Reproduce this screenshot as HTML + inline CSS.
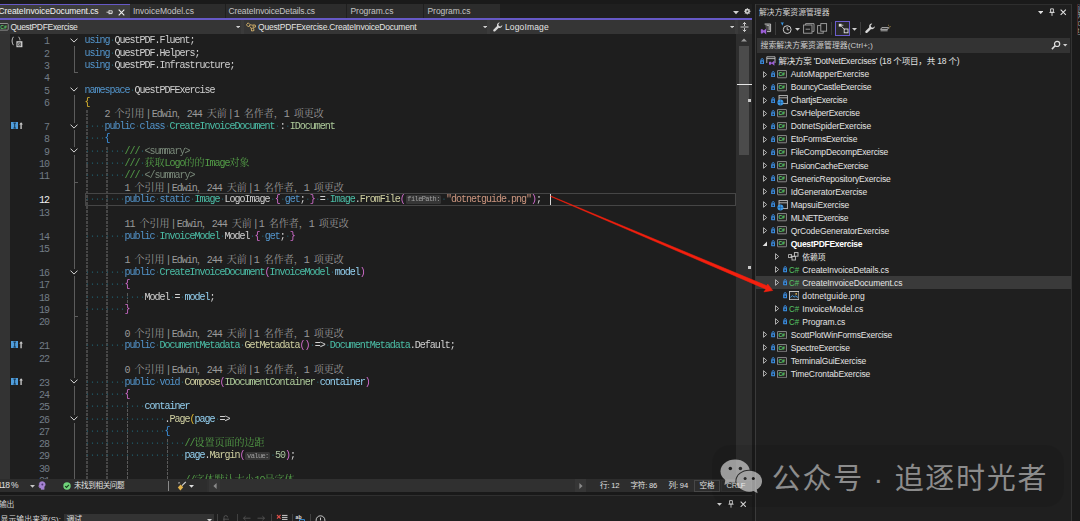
<!DOCTYPE html>
<html lang="zh-CN"><head><meta charset="utf-8"><title>CreateInvoiceDocument.cs</title>
<style>
html,body{margin:0;padding:0;background:#1a1a1a;}
body{width:1080px;height:521px;position:relative;overflow:hidden;font-family:'Liberation Sans','Noto Sans CJK SC',sans-serif;}
.r{position:absolute;display:block}
.t{position:absolute;white-space:pre;font-family:'Liberation Sans','Noto Sans CJK SC',sans-serif;}
.ln,.cl,.num{position:absolute;white-space:pre;font-family:'Liberation Mono','Noto Serif CJK SC',monospace;font-size:10px;letter-spacing:-1px;line-height:12.29px;height:12.29px;color:#dcdcdc}
.ln{left:84.5px;opacity:.94}
.cl{color:#9a9a9a;line-height:11.8px;height:11.8px}
.num{left:18px;width:31px;text-align:right;color:#727c86}
.num.cur{color:#f0f0f0}
.cj{letter-spacing:0;font-size:10px}
.bar{margin:0 1.05px}
.g{position:absolute;width:1.7px;background:repeating-linear-gradient(to bottom,#474747 0,#474747 2.7px,transparent 2.7px,transparent 3.7px)}
.g.thin{width:1px;background:repeating-linear-gradient(to bottom,#5a5a5a 0,#5a5a5a 2.7px,transparent 2.7px,transparent 3.7px)}
.w{color:#21505c}
.k{color:#569cd6}.t_{}
.ln .t{position:static;color:#4ec9b0;font-family:inherit}
.i{color:#b8d7a3}.p{color:#dcdcdc}.v{color:#9cdcfe}.m{color:#dcdcaa}
.c{color:#57a64a}.x{color:#7f8f7f}.s{color:#d69d85}.n{color:#b5cea8}
.b1{color:#e8c030}.b2{color:#3f9cf0}.b3{color:#da70d6}
.hint{display:inline-block;font-size:7px;letter-spacing:-0.6px;line-height:8.6px;height:8.6px;vertical-align:0.8px;background:#383838;color:#a8a8a8;border-radius:1.5px;padding:0 1.2px 0 1.8px;margin:0 0 0 0.7px}
</style></head>
<body>
<div class="r" style="left:0px;top:0px;width:1080px;height:4px;background:#1a1a1a;"></div>
<div class="r" style="left:0px;top:4px;width:752px;height:14px;background:#1f1f1f;"></div>
<div class="r" style="left:0px;top:4px;width:130px;height:14px;background:#3d3d3d;"></div>
<div class="r" style="left:0px;top:3.6px;width:130px;height:1.5px;background:#6659c6;"></div>
<div class="r" style="left:130.3px;top:4.1px;width:94.89999999999998px;height:14px;background:#2c2c2c;"></div>
<div class="r" style="left:226.2px;top:4.1px;width:119.5px;height:14px;background:#2c2c2c;"></div>
<div class="r" style="left:346.7px;top:4.1px;width:76.69999999999999px;height:14px;background:#2c2c2c;"></div>
<div class="r" style="left:424.4px;top:4.1px;width:76.10000000000002px;height:14px;background:#2c2c2c;"></div>
<div class="r" style="left:0px;top:17.8px;width:752px;height:2.2px;background:#6659c6;"></div>
<div class="t" style="left:-1.5px;top:4.05px;height:14px;line-height:14px;font-size:8.5px;color:#f2f2f2;font-weight:normal;letter-spacing:-0.085px;">CreateInvoiceDocument.cs</div>
<div class="t" style="left:133px;top:4.05px;height:14px;line-height:14px;font-size:8.5px;color:#c4c4c4;font-weight:normal;letter-spacing:0.003px;">InvoiceModel.cs</div>
<div class="t" style="left:228.5px;top:4.05px;height:14px;line-height:14px;font-size:8.5px;color:#c4c4c4;font-weight:normal;letter-spacing:-0.122px;">CreateInvoiceDetails.cs</div>
<div class="t" style="left:350.5px;top:4.05px;height:14px;line-height:14px;font-size:8.5px;color:#c4c4c4;font-weight:normal;letter-spacing:-0.047px;">Program.cs</div>
<div class="t" style="left:427.5px;top:4.05px;height:14px;line-height:14px;font-size:8.5px;color:#c4c4c4;font-weight:normal;letter-spacing:-0.047px;">Program.cs</div>
<svg class="r" style="left:106px;top:8px" width="8" height="8" viewBox="0 0 8 8"><path d="M0.5 4.2H3M3 2.2V6.2M3 2.8H6.2V5.2H3M3 5.6H6.2" stroke="#e0e0e0" stroke-width="0.9" fill="none"/></svg>
<svg class="r" style="left:118px;top:9px" width="7" height="7" viewBox="0 0 7 7"><path d="M0.7 0.7L6.3 6.3M6.3 0.7L0.7 6.3" stroke="#f0f0f0" stroke-width="1.1" fill="none"/></svg>
<svg class="r" style="left:732.5px;top:10.5px" width="6" height="4" viewBox="0 0 6 4"><path d="M0 0H6L3 3.2Z" fill="#d0d0d0"/></svg>
<svg class="r" style="left:744px;top:8.4px" width="6.6" height="6.6" viewBox="0 0 8 8"><circle cx="4" cy="4" r="2.3" fill="none" stroke="#d0d0d0" stroke-width="1.6"/><path d="M4 0V8M0 4H8M1.2 1.2L6.8 6.8M6.8 1.2L1.2 6.8" stroke="#d0d0d0" stroke-width="1"/><circle cx="4" cy="4" r="1" fill="#1f1f1f"/></svg>
<div class="r" style="left:0px;top:20px;width:752px;height:13.8px;background:#353535;"></div>
<div class="r" style="left:241px;top:20px;width:3px;height:13.8px;background:#3b3b3b;"></div>
<div class="r" style="left:486.5px;top:20px;width:3px;height:13.8px;background:#3b3b3b;"></div>
<div class="r" style="left:735px;top:20px;width:3px;height:13.8px;background:#3b3b3b;"></div>
<svg class="r" style="left:0px;top:22.5px" width="9" height="8" viewBox="0 0 9 8"><rect x="-1" y="0.5" width="9.2" height="6.6" rx="0.8" fill="#2a2a2a" stroke="#9a9a9a" stroke-width="0.9"/><text x="0.3" y="5.6" font-family="Liberation Sans,sans-serif" font-size="5" font-weight="bold" fill="#5fc46a">C#</text></svg>
<div class="t" style="left:10.5px;top:20.05px;height:14px;line-height:14px;font-size:8.5px;color:#e4e4e4;font-weight:normal;letter-spacing:-0.330px;">QuestPDFExercise</div>
<svg class="r" style="left:235.7px;top:25.7px" width="4.2" height="2.5" viewBox="0 0 5 3"><path d="M0 0H5L2.5 2.8Z" fill="#d0d0d0"/></svg>
<svg class="r" style="left:246px;top:21.5px" width="10" height="10" viewBox="0 0 10 10"><path d="M2.2 0.8L4.2 2.8L2.2 4.8L0.4 2.8Z M6.8 3L9.2 3L9.6 5L7.4 5.4Z M5.2 6.2L7.6 6.2L8 8.6L5.6 9Z" fill="none" stroke="#d6b36c" stroke-width="0.9"/><path d="M4 3H6.6M3.4 4.2L5.4 6.6" stroke="#d6b36c" stroke-width="0.8"/></svg>
<div class="t" style="left:258px;top:20.05px;height:14px;line-height:14px;font-size:8.5px;color:#e4e4e4;font-weight:normal;letter-spacing:-0.193px;">QuestPDFExercise.CreateInvoiceDocument</div>
<svg class="r" style="left:482.9px;top:25.7px" width="4.2" height="2.5" viewBox="0 0 5 3"><path d="M0 0H5L2.5 2.8Z" fill="#d0d0d0"/></svg>
<svg class="r" style="left:493px;top:21.5px" width="10" height="10" viewBox="0 0 10 10"><path d="M6.9 0.6A2.6 2.6 0 0 0 4.1 4.0L0.6 7.6A1 1 0 0 0 2.2 9.2L5.8 5.7A2.6 2.6 0 0 0 9.3 3.0L7.6 4.6L5.9 4.0L5.3 2.3Z" fill="#d8d8d8"/></svg>
<div class="t" style="left:505px;top:20.05px;height:14px;line-height:14px;font-size:8.5px;color:#e4e4e4;font-weight:normal;letter-spacing:0.139px;">LogoImage</div>
<svg class="r" style="left:729.8px;top:25.7px" width="4.2" height="2.5" viewBox="0 0 5 3"><path d="M0 0H5L2.5 2.8Z" fill="#d0d0d0"/></svg>
<svg class="r" style="left:740px;top:21.5px" width="9" height="10" viewBox="0 0 9 10"><path d="M0.5 5H8.5M4.5 0.5V4M4.5 6V9.5M2.8 2.2L4.5 0.5L6.2 2.2M2.8 7.8L4.5 9.5L6.2 7.8" stroke="#d8d8d8" stroke-width="0.9" fill="none"/></svg>
<div class="r" style="left:0px;top:33.8px;width:752px;height:445.5px;background:#1e1e1e;"></div>
<div class="r" style="left:0px;top:33.8px;width:10px;height:445.5px;background:#333333;"></div>
<div class="r" style="left:736px;top:33.8px;width:16px;height:445.5px;background:#2e2e2e;"></div>
<div class="r" style="left:738.5px;top:45.5px;width:10px;height:109px;background:#4b4b4b;"></div>
<svg class="r" style="left:740.5px;top:37.5px" width="6" height="4" viewBox="0 0 6 4"><path d="M0 3.6H6L3 0.4Z" fill="#9a9a9a"/></svg>
<div class="r" style="left:736.5px;top:84.2px;width:15.5px;height:1.1px;background:#e6e6e6;"></div>
<div class="r" style="left:747.6px;top:98.5px;width:3.4px;height:3.4px;background:#c8c8c8;"></div>
<div class="r" style="left:747.6px;top:265.6px;width:3.4px;height:3.4px;background:#c8c8c8;"></div>
<div class="r" style="left:85px;top:193.34px;width:650.5px;height:12.3px;border:1px solid #464646;box-sizing:border-box"></div>
<div class="r" style="left:550.3px;top:193.83999999999995px;width:1.1px;height:11.3px;background:#dcdcdc;"></div>
<div class="g" style="left:86.2px;top:110.19px;height:378.05px"></div>
<div class="g" style="left:106.2px;top:146.57px;height:341.67px"></div>
<div class="g thin" style="left:126.9px;top:292.58px;height:12.29px"></div>
<div class="g thin" style="left:126.9px;top:402.21px;height:86.03px"></div>
<div class="g thin" style="left:166.9px;top:439.08px;height:49.16px"></div>
<div class="r" style="left:73.6px;top:71.72px;width:4.2px;height:1px;background:#5c5c5c"></div>
<div class="r" style="left:73.6px;top:45.74px;width:1px;height:26.98px;background:#5c5c5c"></div>
<div class="r" style="left:73.6px;top:94.90px;width:1px;height:384.40px;background:#5c5c5c"></div>
<div class="r" style="left:73.6px;top:181.84px;width:4.2px;height:1px;background:#5c5c5c"></div>
<div class="r" style="left:73.6px;top:315.56px;width:4.2px;height:1px;background:#5c5c5c"></div>
<div class="r" style="left:70px;top:36.99px;width:8.4px;height:7.6px;background:#1e1e1e"></div>
<svg class="r" style="left:70.2px;top:38.20px" width="8" height="5" viewBox="0 0 8 5"><path d="M0.5 0.6L4 4.1L7.5 0.6" stroke="#d8d8d8" stroke-width="1" fill="none"/></svg>
<div class="r" style="left:70px;top:86.15px;width:8.4px;height:7.6px;background:#1e1e1e"></div>
<svg class="r" style="left:70.2px;top:87.35px" width="8" height="5" viewBox="0 0 8 5"><path d="M0.5 0.6L4 4.1L7.5 0.6" stroke="#d8d8d8" stroke-width="1" fill="none"/></svg>
<div class="r" style="left:70px;top:122.53px;width:8.4px;height:7.6px;background:#1e1e1e"></div>
<svg class="r" style="left:70.2px;top:123.73px" width="8" height="5" viewBox="0 0 8 5"><path d="M0.5 0.6L4 4.1L7.5 0.6" stroke="#d8d8d8" stroke-width="1" fill="none"/></svg>
<div class="r" style="left:70px;top:147.11px;width:8.4px;height:7.6px;background:#1e1e1e"></div>
<svg class="r" style="left:70.2px;top:148.31px" width="8" height="5" viewBox="0 0 8 5"><path d="M0.5 0.6L4 4.1L7.5 0.6" stroke="#d8d8d8" stroke-width="1" fill="none"/></svg>
<div class="r" style="left:70px;top:268.54px;width:8.4px;height:7.6px;background:#1e1e1e"></div>
<svg class="r" style="left:70.2px;top:269.74px" width="8" height="5" viewBox="0 0 8 5"><path d="M0.5 0.6L4 4.1L7.5 0.6" stroke="#d8d8d8" stroke-width="1" fill="none"/></svg>
<div class="r" style="left:70px;top:378.18px;width:8.4px;height:7.6px;background:#1e1e1e"></div>
<svg class="r" style="left:70.2px;top:379.38px" width="8" height="5" viewBox="0 0 8 5"><path d="M0.5 0.6L4 4.1L7.5 0.6" stroke="#d8d8d8" stroke-width="1" fill="none"/></svg>
<div class="r" style="left:70px;top:415.05px;width:8.4px;height:7.6px;background:#1e1e1e"></div>
<svg class="r" style="left:70.2px;top:416.25px" width="8" height="5" viewBox="0 0 8 5"><path d="M0.5 0.6L4 4.1L7.5 0.6" stroke="#d8d8d8" stroke-width="1" fill="none"/></svg>
<div class="r" style="left:11px;top:122.04px;width:7.3px;height:7.1px;background:#4f9ddb"></div>
<svg class="r" style="left:11px;top:122.04px" width="13" height="7.4" viewBox="0 0 13 7.4"><path d="M2.4 1.1H5M2.4 6.1H5M3.7 1.1V6.1" stroke="#10283d" stroke-width="0.9" fill="none"/><path d="M10.1 7.2V2" stroke="#a8a8a8" stroke-width="1.7" fill="none"/><path d="M8.3 2.6L10.1 0.3L11.9 2.6Z" fill="#d0d0d0"/></svg>
<div class="r" style="left:11px;top:341.30px;width:7.3px;height:7.1px;background:#4f9ddb"></div>
<svg class="r" style="left:11px;top:341.30px" width="13" height="7.4" viewBox="0 0 13 7.4"><path d="M2.4 1.1H5M2.4 6.1H5M3.7 1.1V6.1" stroke="#10283d" stroke-width="0.9" fill="none"/><path d="M10.1 7.2V2" stroke="#a8a8a8" stroke-width="1.7" fill="none"/><path d="M8.3 2.6L10.1 0.3L11.9 2.6Z" fill="#d0d0d0"/></svg>
<div class="r" style="left:11px;top:377.68px;width:7.3px;height:7.1px;background:#4f9ddb"></div>
<svg class="r" style="left:11px;top:377.68px" width="13" height="7.4" viewBox="0 0 13 7.4"><path d="M2.4 1.1H5M2.4 6.1H5M3.7 1.1V6.1" stroke="#10283d" stroke-width="0.9" fill="none"/><path d="M10.1 7.2V2" stroke="#a8a8a8" stroke-width="1.7" fill="none"/><path d="M8.3 2.6L10.1 0.3L11.9 2.6Z" fill="#d0d0d0"/></svg>
<svg class="r" style="left:11px;top:36px" width="13" height="13" viewBox="0 0 13 13"><path d="M2.4 0.8C0.6 3.5 0.6 6.5 2.4 9.2M7.6 0.8C8.6 2.2 9 3.2 9 4.4" stroke="#d0d0d0" stroke-width="0.9" fill="none"/><rect x="5.4" y="5.2" width="6" height="6" fill="#d0d0d0"/><path d="M6.8 6.8H9.6V9.8H6.8ZM7.6 7.6L9 8.3L7.6 9" fill="none" stroke="#2a2a2a" stroke-width="0.7"/></svg>
<div class="num" style="top:36.45px">1</div>
<div class="ln" style="top:35.45px"><span class="k">using</span><span class="w">·</span><span class="p">QuestPDF.Fluent;</span></div>
<div class="num" style="top:48.74px">2</div>
<div class="ln" style="top:47.74px"><span class="k">using</span><span class="w">·</span><span class="p">QuestPDF.Helpers;</span></div>
<div class="num" style="top:61.03px">3</div>
<div class="ln" style="top:60.03px"><span class="k">using</span><span class="w">·</span><span class="p">QuestPDF.Infrastructure;</span></div>
<div class="num" style="top:73.32px">4</div>
<div class="num" style="top:85.61px">5</div>
<div class="ln" style="top:84.61px"><span class="k">namespace</span><span class="w">·</span><span class="p">QuestPDFExercise</span></div>
<div class="num" style="top:97.90px">6</div>
<div class="ln" style="top:96.90px"><span class="b1">{</span></div>
<div class="cl" style="top:109.29px;left:104.5px">2 <span class="cj">个引用</span><span class="bar">|</span>Edwin<span class="cj">，</span>244 <span class="cj">天前</span><span class="bar">|</span>1 <span class="cj">名作者，</span>1 <span class="cj">项更改</span></div>
<div class="num" style="top:121.99px">7</div>
<div class="ln" style="top:120.99px"><span class="w">····</span><span class="k">public</span><span class="w">·</span><span class="k">class</span><span class="w">·</span><span class="t">CreateInvoiceDocument</span><span class="w">·</span><span class="p">:</span><span class="w">·</span><span class="i">IDocument</span></div>
<div class="num" style="top:134.28px">8</div>
<div class="ln" style="top:133.28px"><span class="w">····</span><span class="b2">{</span></div>
<div class="num" style="top:146.57px">9</div>
<div class="ln" style="top:145.57px"><span class="w">········</span><span class="c">///</span><span class="w">·</span><span class="x">&lt;summary&gt;</span></div>
<div class="num" style="top:158.86px">10</div>
<div class="ln" style="top:157.86px"><span class="w">········</span><span class="c">///</span><span class="w">·</span><span class="c"><span class="cj">获取</span>Logo<span class="cj">的的</span>Image<span class="cj">对象</span></span></div>
<div class="num" style="top:171.15px">11</div>
<div class="ln" style="top:170.15px"><span class="w">········</span><span class="c">///</span><span class="w">·</span><span class="x">&lt;/summary&gt;</span></div>
<div class="cl" style="top:182.54px;left:124.5px">1 <span class="cj">个引用</span><span class="bar">|</span>Edwin<span class="cj">，</span>244 <span class="cj">天前</span><span class="bar">|</span>1 <span class="cj">名作者，</span>1 <span class="cj">项更改</span></div>
<div class="num cur" style="top:195.24px">12</div>
<div class="ln" style="top:194.24px"><span class="w">········</span><span class="k">public</span><span class="w">·</span><span class="k">static</span><span class="w">·</span><span class="t">Image</span><span class="w">·</span><span class="p">LogoImage</span><span class="w">·</span><span class="b3">{</span><span class="w">·</span><span class="k">get</span><span class="p">;</span><span class="w">·</span><span class="b3">}</span><span class="w">·</span><span class="p">=</span><span class="w">·</span><span class="t">Image</span><span class="p">.</span><span class="m">FromFile</span><span class="b3">(</span><span class="hint">filePath:</span><span class="w">·</span><span class="s">"dotnetguide.png"</span><span class="b3">)</span><span class="p">;</span></div>
<div class="num" style="top:207.53px">13</div>
<div class="cl" style="top:218.92px;left:124.5px">11 <span class="cj">个引用</span><span class="bar">|</span>Edwin<span class="cj">，</span>244 <span class="cj">天前</span><span class="bar">|</span>1 <span class="cj">名作者，</span>1 <span class="cj">项更改</span></div>
<div class="num" style="top:231.62px">14</div>
<div class="ln" style="top:230.62px"><span class="w">········</span><span class="k">public</span><span class="w">·</span><span class="t">InvoiceModel</span><span class="w">·</span><span class="p">Model</span><span class="w">·</span><span class="b3">{</span><span class="w">·</span><span class="k">get</span><span class="p">;</span><span class="w">·</span><span class="b3">}</span></div>
<div class="num" style="top:243.91px">15</div>
<div class="cl" style="top:255.30px;left:124.5px">1 <span class="cj">个引用</span><span class="bar">|</span>Edwin<span class="cj">，</span>244 <span class="cj">天前</span><span class="bar">|</span>1 <span class="cj">名作者，</span>1 <span class="cj">项更改</span></div>
<div class="num" style="top:268.00px">16</div>
<div class="ln" style="top:267.00px"><span class="w">········</span><span class="k">public</span><span class="w">·</span><span class="t">CreateInvoiceDocument</span><span class="b3">(</span><span class="t">InvoiceModel</span><span class="w">·</span><span class="v">model</span><span class="b3">)</span></div>
<div class="num" style="top:280.29px">17</div>
<div class="ln" style="top:279.29px"><span class="w">········</span><span class="b3">{</span></div>
<div class="num" style="top:292.58px">18</div>
<div class="ln" style="top:291.58px"><span class="w">············</span><span class="p">Model</span><span class="w">·</span><span class="p">=</span><span class="w">·</span><span class="v">model</span><span class="p">;</span></div>
<div class="num" style="top:304.87px">19</div>
<div class="ln" style="top:303.87px"><span class="w">········</span><span class="b3">}</span></div>
<div class="num" style="top:317.16px">20</div>
<div class="cl" style="top:328.55px;left:124.5px">0 <span class="cj">个引用</span><span class="bar">|</span>Edwin<span class="cj">，</span>244 <span class="cj">天前</span><span class="bar">|</span>1 <span class="cj">名作者，</span>1 <span class="cj">项更改</span></div>
<div class="num" style="top:341.25px">21</div>
<div class="ln" style="top:340.25px"><span class="w">········</span><span class="k">public</span><span class="w">·</span><span class="t">DocumentMetadata</span><span class="w">·</span><span class="m">GetMetadata</span><span class="b3">()</span><span class="w">·</span><span class="p">=&gt;</span><span class="w">·</span><span class="t">DocumentMetadata</span><span class="p">.Default;</span></div>
<div class="num" style="top:353.54px">22</div>
<div class="cl" style="top:364.93px;left:124.5px">0 <span class="cj">个引用</span><span class="bar">|</span>Edwin<span class="cj">，</span>244 <span class="cj">天前</span><span class="bar">|</span>1 <span class="cj">名作者，</span>1 <span class="cj">项更改</span></div>
<div class="num" style="top:377.63px">23</div>
<div class="ln" style="top:376.63px"><span class="w">········</span><span class="k">public</span><span class="w">·</span><span class="k">void</span><span class="w">·</span><span class="m">Compose</span><span class="b3">(</span><span class="i">IDocumentContainer</span><span class="w">·</span><span class="v">container</span><span class="b3">)</span></div>
<div class="num" style="top:389.92px">24</div>
<div class="ln" style="top:388.92px"><span class="w">········</span><span class="b3">{</span></div>
<div class="num" style="top:402.21px">25</div>
<div class="ln" style="top:401.21px"><span class="w">············</span><span class="v">container</span></div>
<div class="num" style="top:414.50px">26</div>
<div class="ln" style="top:413.50px"><span class="w">················</span><span class="p">.</span><span class="m">Page</span><span class="b1">(</span><span class="v">page</span><span class="w">·</span><span class="p">=&gt;</span></div>
<div class="num" style="top:426.79px">27</div>
<div class="ln" style="top:425.79px"><span class="w">················</span><span class="b2">{</span></div>
<div class="num" style="top:439.08px">28</div>
<div class="ln" style="top:438.08px"><span class="w">····················</span><span class="c">//<span class="cj">设置页面的边距</span></span></div>
<div class="num" style="top:451.37px">29</div>
<div class="ln" style="top:450.37px"><span class="w">····················</span><span class="v">page</span><span class="p">.</span><span class="m">Margin</span><span class="b3">(</span><span class="hint">value:</span><span class="w">·</span><span class="n">50</span><span class="b3">)</span><span class="p">;</span></div>
<div class="num" style="top:463.66px">30</div>
<div class="num" style="top:475.95px">31</div>
<div class="ln" style="top:474.95px"><span class="w">····················</span><span class="c">//<span class="cj">字体默认大小</span>10<span class="cj">号字体</span></span></div>
<div class="r" style="left:0px;top:479.3px;width:752px;height:12.7px;background:#2d2d2d;"></div>
<div class="r" style="left:207px;top:479.3px;width:368px;height:12.7px;background:#303030;"></div>
<div class="r" style="left:208.5px;top:479.3px;width:11.5px;height:12.7px;background:#363636;"></div>
<div class="r" style="left:574.8px;top:479.3px;width:11.5px;height:12.7px;background:#363636;"></div>
<div class="r" style="left:0px;top:492px;width:752px;height:3px;background:#191919;"></div>
<div class="t" style="left:-2.5px;top:478.05px;height:14px;line-height:14px;font-size:8.5px;color:#e0e0e0;font-weight:normal;letter-spacing:-0.597px;">118 %</div>
<svg class="r" style="left:29.5px;top:484.8px" width="5" height="3" viewBox="0 0 5 3"><path d="M0 0H5L2.5 2.8Z" fill="#c8c8c8"/></svg>
<svg class="r" style="left:38px;top:481.4px" width="8" height="9" viewBox="0 0 9 10"><path d="M4.6 0.6C2.2 0.6 1 2.4 1.4 4.2L0.6 6H1.6V7.8H3.4V9.4H7V6.4C8.4 5.4 8.6 3.6 7.8 2.2C7.2 1.2 6 0.6 4.6 0.6Z" fill="#a583d2" stroke="#a583d2" stroke-width="0.4"/><circle cx="4.9" cy="3.8" r="1.1" fill="#4a3470"/></svg>
<svg class="r" style="left:63.2px;top:482px" width="8" height="8" viewBox="0 0 8 8"><circle cx="4" cy="4" r="3.7" fill="#6fd47a"/><path d="M2.2 4.1L3.5 5.4L5.9 2.8" stroke="#173a1c" stroke-width="1.1" fill="none"/></svg>
<div class="t" style="left:73.9px;top:478.55px;height:14px;line-height:14px;font-size:7.6px;color:#e0e0e0;font-weight:normal;letter-spacing:-0.408px;">未找到相关问题</div>
<div class="r" style="left:167.8px;top:481px;width:1px;height:9.6px;background:#8a8a8a;"></div>
<svg class="r" style="left:177px;top:481px" width="10" height="10" viewBox="0 0 10 10"><path d="M8.8 0.8L5 4.6" stroke="#d8d8d8" stroke-width="1.1"/><path d="M3.6 3.6L6.2 6.2L3.4 9.4L0.8 6.4Z" fill="#e2b34c"/><path d="M1.4 1.2L2.8 2.6M2.8 1.2L1.4 2.6" stroke="#d8d8d8" stroke-width="0.6"/></svg>
<svg class="r" style="left:188.8px;top:484.8px" width="5" height="3" viewBox="0 0 5 3"><path d="M0 0H5L2.5 2.8Z" fill="#e0e0e0"/></svg>
<svg class="r" style="left:212.5px;top:483px" width="4" height="6" viewBox="0 0 4 6"><path d="M3.6 0V6L0.4 3Z" fill="#8a8a8a"/></svg>
<svg class="r" style="left:578.5px;top:483px" width="4" height="6" viewBox="0 0 4 6"><path d="M0.4 0V6L3.6 3Z" fill="#8a8a8a"/></svg>
<div class="t" style="left:600px;top:478.55px;height:14px;line-height:14px;font-size:7.6px;color:#e0e0e0;font-weight:normal;letter-spacing:-0.193px;">行: 12</div>
<div class="t" style="left:630.5px;top:478.55px;height:14px;line-height:14px;font-size:7.6px;color:#e0e0e0;font-weight:normal;letter-spacing:-0.227px;">字符: 86</div>
<div class="t" style="left:668.5px;top:478.55px;height:14px;line-height:14px;font-size:7.6px;color:#e0e0e0;font-weight:normal;letter-spacing:-0.153px;">列: 94</div>
<div class="r" style="left:693.5px;top:479.8px;width:26.5px;height:11.8px;background:#2d2d2d;border:1px solid #474747;box-sizing:border-box"></div>
<div class="t" style="left:699.5px;top:478.55px;height:14px;line-height:14px;font-size:7.6px;color:#e0e0e0;font-weight:normal;letter-spacing:-0.194px;">空格</div>
<div class="r" style="left:720.5px;top:479.8px;width:31px;height:11.8px;background:#2d2d2d;border:1px solid #343434;box-sizing:border-box"></div>
<div class="t" style="left:726.6px;top:478.55px;height:14px;line-height:14px;font-size:7.6px;color:#e0e0e0;font-weight:normal;letter-spacing:-0.336px;">CRLF</div>
<div class="r" style="left:0px;top:495px;width:752px;height:26px;background:#1f1f1f;"></div>
<div class="r" style="left:0px;top:495.4px;width:752.5px;height:0.9px;background:#2f2f2f;"></div>
<div class="r" style="left:752px;top:495.4px;width:0.9px;height:26px;background:#2f2f2f;"></div>
<div class="t" style="left:-1px;top:497.55px;height:14px;line-height:14px;font-size:7.8px;color:#cfcfcf;font-weight:normal;letter-spacing:-0.297px;">输出</div>
<svg class="r" style="left:716.8px;top:502.8px" width="5" height="3" viewBox="0 0 5 3"><path d="M0 0H5L2.5 2.8Z" fill="#d0d0d0"/></svg>
<svg class="r" style="left:727.5px;top:499.5px" width="6" height="8" viewBox="0 0 6 8"><path d="M1.6 0.6H4.4V4H1.6ZM0.4 4.2H5.6M3 4.2V7.6" stroke="#d8d8d8" stroke-width="0.9" fill="none"/></svg>
<svg class="r" style="left:739.5px;top:500.5px" width="6.5" height="6.5" viewBox="0 0 7 7"><path d="M0.7 0.7L6.3 6.3M6.3 0.7L0.7 6.3" stroke="#e6e6e6" stroke-width="1.1" fill="none"/></svg>
<div class="t" style="left:0.5px;top:512.55px;height:14px;line-height:14px;font-size:7.8px;color:#d8d8d8;font-weight:normal;letter-spacing:0.116px;">显示输出来源(S):</div>
<div class="r" style="left:63.8px;top:513.6px;width:150.2px;height:8px;background:#333333;"></div>
<div class="t" style="left:66.5px;top:512.55px;height:14px;line-height:14px;font-size:7.8px;color:#e4e4e4;font-weight:normal;letter-spacing:-0.047px;">调试</div>
<svg class="r" style="left:207px;top:518.5px" width="5" height="3" viewBox="0 0 5 3"><path d="M0 0H5L2.5 2.8Z" fill="#d0d0d0"/></svg>
<div class="r" style="left:217.4px;top:513.8px;width:0.9px;height:8px;background:#404040;"></div>
<div class="r" style="left:237.2px;top:513.8px;width:0.9px;height:8px;background:#404040;"></div>
<div class="r" style="left:271px;top:513.8px;width:0.9px;height:8px;background:#404040;"></div>
<div class="r" style="left:291.5px;top:513.8px;width:0.9px;height:8px;background:#404040;"></div>
<div class="r" style="left:310px;top:513.8px;width:0.9px;height:8px;background:#404040;"></div>
<svg class="r" style="left:220px;top:513px" width="110" height="8" viewBox="220 513 110 8"><g fill="none" stroke-width="0.9"><path d="M224 521V517.4A1.8 1.8 0 0 1 227.6 517.4M223 519.2H229" stroke="#555"/><path d="M243.5 518.2H250.5M245.6 516.2L243.5 518.2L245.6 520.2" stroke="#555"/><path d="M257.5 518.2H264.5M262.4 516.2L264.5 518.2L262.4 520.2" stroke="#555"/><path d="M277 515L280.6 518.6M280.6 515L277 518.6" stroke="#e2504a" stroke-width="1.1"/><path d="M282 515.4H287.5M282 517.4H287.5M282 519.4H287.5" stroke="#e0e0e0"/><path d="M299.5 521V519.6H304.5V521" stroke="#3d9be8"/><circle cx="320.5" cy="520.2" r="4.4" stroke="#d8d8d8"/><path d="M320.5 517.6V520.4" stroke="#d8d8d8"/></g><text x="295.6" y="518.8" font-family="Liberation Sans,sans-serif" font-size="5.2" font-weight="bold" fill="#e0e0e0">ab</text></svg>
<div class="r" style="left:752px;top:0px;width:328px;height:521px;background:#1a1a1a;"></div>
<div class="r" style="left:755.3px;top:4px;width:316.2px;height:517px;background:#1f1f1f;"></div>
<div class="r" style="left:755.3px;top:4px;width:316.2px;height:0.8px;background:#2e2e2e;"></div>
<div class="r" style="left:755.3px;top:4px;width:0.9px;height:517px;background:#3a3a3a;"></div>
<div class="r" style="left:1071px;top:4px;width:0.9px;height:517px;background:#333333;"></div>
<div class="t" style="left:759px;top:5.55px;height:14px;line-height:14px;font-size:7.8px;color:#d4d4d4;font-weight:normal;letter-spacing:0.036px;">解决方案资源管理器</div>
<svg class="r" style="left:1037.6px;top:11px" width="5.5" height="3.4" viewBox="0 0 5 3"><path d="M0 0H5L2.5 2.8Z" fill="#e0e0e0"/></svg>
<svg class="r" style="left:1048.5px;top:7.8px" width="6" height="8.5" viewBox="0 0 6 8"><path d="M1.6 0.6H4.4V4H1.6ZM0.4 4.2H5.6M3 4.2V7.6" stroke="#e0e0e0" stroke-width="0.9" fill="none"/></svg>
<svg class="r" style="left:1060px;top:9px" width="6.5" height="6.5" viewBox="0 0 7 7"><path d="M0.7 0.7L6.3 6.3M6.3 0.7L0.7 6.3" stroke="#e6e6e6" stroke-width="1.1" fill="none"/></svg>
<div class="t" style="left:1077.3px;top:4px;width:8px;height:31px;font-size:7.5px;line-height:7.8px;color:#8fa3ad;overflow:hidden;white-space:normal;word-break:break-all">通知Git更改</div>
<div class="r" style="left:1076.6px;top:4px;width:0.7px;height:31px;background:#4a2626;"></div>
<svg class="r" style="left:760px;top:22.6px" width="12" height="12" viewBox="0 0 12 12"><path d="M4.6 1H10.6V8.6H7" fill="#4a4a4a" stroke="#c8c8c8" stroke-width="0.9"/><path d="M6.6 2.4H9.2V7" stroke="#c8c8c8" stroke-width="0.8" fill="none"/><path d="M0.8 6.6L2 6L3.8 7.6L6.2 5.4V11.4L3.8 9.2L2 10.8L0.8 10.2Z" fill="#9b5fd6"/></svg>
<div class="r" style="left:775.4px;top:22.1px;width:0.9px;height:13px;background:#3d3d3d;"></div>
<svg class="r" style="left:779.5px;top:21.6px" width="13" height="13" viewBox="0 0 13 13"><circle cx="7.2" cy="7.6" r="3.9" fill="none" stroke="#d0d0d0" stroke-width="1"/><path d="M7.2 5.2V7.8H9.2" stroke="#d0d0d0" stroke-width="0.9" fill="none"/><path d="M0.6 0.6H4L2.8 2V3.6L1.8 3V2Z" fill="#3d9be8"/></svg>
<svg class="r" style="left:794.5px;top:28.0px" width="5" height="3" viewBox="0 0 5 3"><path d="M0 0H5L2.5 2.8Z" fill="#d0d0d0"/></svg>
<svg class="r" style="left:802.5px;top:23.1px" width="12" height="11" viewBox="0 0 12 11"><rect x="0.6" y="2" width="8.4" height="8.2" fill="none" stroke="#a4a4a4" stroke-width="0.9"/><path d="M2.6 2V0.6H11V8.4H9.2M2.6 6.2H7" stroke="#a4a4a4" stroke-width="0.9" fill="none"/></svg>
<svg class="r" style="left:817px;top:23.1px" width="11" height="11" viewBox="0 0 11 11"><rect x="0.6" y="2.6" width="5.6" height="7.6" fill="none" stroke="#a4a4a4" stroke-width="0.9"/><rect x="3.8" y="0.6" width="5.8" height="7.6" fill="#1f1f1f" stroke="#a4a4a4" stroke-width="0.9"/></svg>
<div class="r" style="left:831.3px;top:22.1px;width:0.9px;height:13px;background:#3d3d3d;"></div>
<div class="r" style="left:835.4px;top:21.200000000000003px;width:14.8px;height:14.8px;background:#2a2a2a;border:1px solid #6a5ccc;box-sizing:border-box"></div>
<svg class="r" style="left:837.6px;top:23.400000000000002px" width="11" height="11" viewBox="0 0 11 11"><rect x="0.8" y="0.8" width="2.8" height="2.8" fill="#e0e0e0"/><path d="M3.4 3.2L6.6 6.6M3.6 2.2H5.4" stroke="#e0e0e0" stroke-width="0.8"/><rect x="6.2" y="6" width="3.8" height="3.8" fill="none" stroke="#e0e0e0" stroke-width="0.9"/></svg>
<svg class="r" style="left:852px;top:28.0px" width="5" height="3" viewBox="0 0 5 3"><path d="M0 0H5L2.5 2.8Z" fill="#d0d0d0"/></svg>
<div class="r" style="left:860.4px;top:22.1px;width:0.9px;height:13px;background:#3d3d3d;"></div>
<svg class="r" style="left:865px;top:23.1px" width="10.5" height="10.5" viewBox="0 0 10 10"><path d="M6.9 0.6A2.6 2.6 0 0 0 4.1 4.0L0.6 7.6A1 1 0 0 0 2.2 9.2L5.8 5.7A2.6 2.6 0 0 0 9.3 3.0L7.6 4.6L5.9 4.0L5.3 2.3Z" fill="#d8d8d8"/></svg>
<svg class="r" style="left:879.5px;top:24.1px" width="11" height="9" viewBox="0 0 11 9"><path d="M0.6 5.4H7.6L8.6 3.6H1.8Z" fill="none" stroke="#d0d0d0" stroke-width="0.8"/><path d="M0.6 6.8H7.6" stroke="#d0d0d0" stroke-width="0.8"/><path d="M8.2 1.6L9 0.8M9.6 2.6H10.6M9.4 3.8L10 4.4" stroke="#e2b34c" stroke-width="0.7"/></svg>
<div class="r" style="left:757.3px;top:38.3px;width:312.9px;height:14.7px;background:#333333;"></div>
<div class="t" style="left:760.5px;top:38.55px;height:14px;line-height:14px;font-size:7.8px;color:#cfcfcf;font-weight:normal;letter-spacing:0.136px;">搜索解决方案资源管理器(Ctrl+;)</div>
<svg class="r" style="left:1051px;top:40.4px" width="10" height="10" viewBox="0 0 10 10"><circle cx="6.1" cy="3.9" r="2.6" fill="none" stroke="#e0e0e0" stroke-width="1.2"/><path d="M4.2 5.8L0.9 9.1" stroke="#e0e0e0" stroke-width="1.5"/></svg>
<svg class="r" style="left:1063.4px;top:44px" width="4.4" height="2.8" viewBox="0 0 5 3"><path d="M0 0H5L2.5 2.8Z" fill="#d0d0d0"/></svg>
<svg class="r" style="left:759.6px;top:57.80px" width="4.4" height="6.4" viewBox="0 0 4.4 6.4"><path d="M1.1 2.4V1.7A1.1 1.1 0 0 1 3.3 1.7V2.4" fill="none" stroke="#3b8fe4" stroke-width="0.95"/><rect x="0.15" y="2.2" width="4.1" height="4.1" rx="0.5" fill="#3b8fe4"/><rect x="1.45" y="3.5" width="1.5" height="1.7" fill="#1f2a36"/></svg>
<svg class="r" style="left:765.5px;top:56.30px" width="10" height="10" viewBox="0 0 10 10"><path d="M0.8 7V0.8H9V7" fill="none" stroke="#c0c0c0" stroke-width="0.9"/><path d="M0.8 2.6H9" stroke="#c0c0c0" stroke-width="0.9"/><path d="M3 6L4.2 5.4L5.8 6.8L8.4 4.4V9.8L5.8 7.6L4.2 9L3 8.4Z" fill="#9b5fd6"/></svg>
<div class="t" style="left:778.4px;top:54.05px;height:14px;line-height:14px;font-size:8.5px;color:#e4e4e4;font-weight:normal;letter-spacing:-0.183px;">解决方案 'DotNetExercises' (18 个项目，共 18 个)</div>
<svg class="r" style="left:762.6px;top:70.53px" width="4.4" height="7" viewBox="0 0 5 8"><path d="M0.6 0.8L4.2 4L0.6 7.2Z" fill="none" stroke="#c4c4c4" stroke-width="1"/></svg>
<svg class="r" style="left:771.0px;top:70.83px" width="4.4" height="6.4" viewBox="0 0 4.4 6.4"><path d="M1.1 2.4V1.7A1.1 1.1 0 0 1 3.3 1.7V2.4" fill="none" stroke="#3b8fe4" stroke-width="0.95"/><rect x="0.15" y="2.2" width="4.1" height="4.1" rx="0.5" fill="#3b8fe4"/><rect x="1.45" y="3.5" width="1.5" height="1.7" fill="#1f2a36"/></svg>
<svg class="r" style="left:777px;top:70.13px" width="10" height="8.6" viewBox="0 0 10 8.6"><rect x="0.5" y="0.5" width="9" height="7.3" rx="0.3" fill="#262626" stroke="#8e8e8e" stroke-width="0.9"/><text x="1.5" y="6" font-family="Liberation Sans,sans-serif" font-size="5" font-weight="bold" fill="#5fd070">C#</text></svg>
<div class="t" style="left:790.7px;top:67.05px;height:14px;line-height:14px;font-size:8.5px;color:#e4e4e4;font-weight:normal;letter-spacing:-0.023px;">AutoMapperExercise</div>
<svg class="r" style="left:762.6px;top:83.55px" width="4.4" height="7" viewBox="0 0 5 8"><path d="M0.6 0.8L4.2 4L0.6 7.2Z" fill="none" stroke="#c4c4c4" stroke-width="1"/></svg>
<svg class="r" style="left:771.0px;top:83.85px" width="4.4" height="6.4" viewBox="0 0 4.4 6.4"><path d="M1.1 2.4V1.7A1.1 1.1 0 0 1 3.3 1.7V2.4" fill="none" stroke="#3b8fe4" stroke-width="0.95"/><rect x="0.15" y="2.2" width="4.1" height="4.1" rx="0.5" fill="#3b8fe4"/><rect x="1.45" y="3.5" width="1.5" height="1.7" fill="#1f2a36"/></svg>
<svg class="r" style="left:777px;top:83.15px" width="10" height="8.6" viewBox="0 0 10 8.6"><rect x="0.5" y="0.5" width="9" height="7.3" rx="0.3" fill="#262626" stroke="#8e8e8e" stroke-width="0.9"/><text x="1.5" y="6" font-family="Liberation Sans,sans-serif" font-size="5" font-weight="bold" fill="#5fd070">C#</text></svg>
<div class="t" style="left:790.7px;top:80.05px;height:14px;line-height:14px;font-size:8.5px;color:#e4e4e4;font-weight:normal;letter-spacing:-0.227px;">BouncyCastleExercise</div>
<svg class="r" style="left:762.6px;top:96.58px" width="4.4" height="7" viewBox="0 0 5 8"><path d="M0.6 0.8L4.2 4L0.6 7.2Z" fill="none" stroke="#c4c4c4" stroke-width="1"/></svg>
<svg class="r" style="left:771.0px;top:96.88px" width="4.4" height="6.4" viewBox="0 0 4.4 6.4"><path d="M1.1 2.4V1.7A1.1 1.1 0 0 1 3.3 1.7V2.4" fill="none" stroke="#3b8fe4" stroke-width="0.95"/><rect x="0.15" y="2.2" width="4.1" height="4.1" rx="0.5" fill="#3b8fe4"/><rect x="1.45" y="3.5" width="1.5" height="1.7" fill="#1f2a36"/></svg>
<svg class="r" style="left:776.5px;top:95.38px" width="11" height="11" viewBox="0 0 11 11"><rect x="2" y="0.6" width="8.4" height="8" fill="none" stroke="#c0c0c0" stroke-width="0.9"/><path d="M2 2.8H10.4" stroke="#c0c0c0" stroke-width="0.9"/><circle cx="3.4" cy="7.4" r="3" fill="#3d9be8"/><path d="M0.6 7.4H6.2M3.4 4.4V10.4" stroke="#1b4e80" stroke-width="0.5"/></svg>
<div class="t" style="left:790.7px;top:93.05px;height:14px;line-height:14px;font-size:8.5px;color:#e4e4e4;font-weight:normal;letter-spacing:-0.202px;">ChartjsExercise</div>
<svg class="r" style="left:762.6px;top:109.60px" width="4.4" height="7" viewBox="0 0 5 8"><path d="M0.6 0.8L4.2 4L0.6 7.2Z" fill="none" stroke="#c4c4c4" stroke-width="1"/></svg>
<svg class="r" style="left:771.0px;top:109.90px" width="4.4" height="6.4" viewBox="0 0 4.4 6.4"><path d="M1.1 2.4V1.7A1.1 1.1 0 0 1 3.3 1.7V2.4" fill="none" stroke="#3b8fe4" stroke-width="0.95"/><rect x="0.15" y="2.2" width="4.1" height="4.1" rx="0.5" fill="#3b8fe4"/><rect x="1.45" y="3.5" width="1.5" height="1.7" fill="#1f2a36"/></svg>
<svg class="r" style="left:777px;top:109.20px" width="10" height="8.6" viewBox="0 0 10 8.6"><rect x="0.5" y="0.5" width="9" height="7.3" rx="0.3" fill="#262626" stroke="#8e8e8e" stroke-width="0.9"/><text x="1.5" y="6" font-family="Liberation Sans,sans-serif" font-size="5" font-weight="bold" fill="#5fd070">C#</text></svg>
<div class="t" style="left:790.7px;top:106.05px;height:14px;line-height:14px;font-size:8.5px;color:#e4e4e4;font-weight:normal;letter-spacing:-0.193px;">CsvHelperExercise</div>
<svg class="r" style="left:762.6px;top:122.63px" width="4.4" height="7" viewBox="0 0 5 8"><path d="M0.6 0.8L4.2 4L0.6 7.2Z" fill="none" stroke="#c4c4c4" stroke-width="1"/></svg>
<svg class="r" style="left:771.0px;top:122.93px" width="4.4" height="6.4" viewBox="0 0 4.4 6.4"><path d="M1.1 2.4V1.7A1.1 1.1 0 0 1 3.3 1.7V2.4" fill="none" stroke="#3b8fe4" stroke-width="0.95"/><rect x="0.15" y="2.2" width="4.1" height="4.1" rx="0.5" fill="#3b8fe4"/><rect x="1.45" y="3.5" width="1.5" height="1.7" fill="#1f2a36"/></svg>
<svg class="r" style="left:777px;top:122.23px" width="10" height="8.6" viewBox="0 0 10 8.6"><rect x="0.5" y="0.5" width="9" height="7.3" rx="0.3" fill="#262626" stroke="#8e8e8e" stroke-width="0.9"/><text x="1.5" y="6" font-family="Liberation Sans,sans-serif" font-size="5" font-weight="bold" fill="#5fd070">C#</text></svg>
<div class="t" style="left:790.7px;top:119.05px;height:14px;line-height:14px;font-size:8.5px;color:#e4e4e4;font-weight:normal;letter-spacing:-0.086px;">DotnetSpiderExercise</div>
<svg class="r" style="left:762.6px;top:135.66px" width="4.4" height="7" viewBox="0 0 5 8"><path d="M0.6 0.8L4.2 4L0.6 7.2Z" fill="none" stroke="#c4c4c4" stroke-width="1"/></svg>
<svg class="r" style="left:771.0px;top:135.96px" width="4.4" height="6.4" viewBox="0 0 4.4 6.4"><path d="M1.1 2.4V1.7A1.1 1.1 0 0 1 3.3 1.7V2.4" fill="none" stroke="#3b8fe4" stroke-width="0.95"/><rect x="0.15" y="2.2" width="4.1" height="4.1" rx="0.5" fill="#3b8fe4"/><rect x="1.45" y="3.5" width="1.5" height="1.7" fill="#1f2a36"/></svg>
<svg class="r" style="left:777px;top:135.26px" width="10" height="8.6" viewBox="0 0 10 8.6"><rect x="0.5" y="0.5" width="9" height="7.3" rx="0.3" fill="#262626" stroke="#8e8e8e" stroke-width="0.9"/><text x="1.5" y="6" font-family="Liberation Sans,sans-serif" font-size="5" font-weight="bold" fill="#5fd070">C#</text></svg>
<div class="t" style="left:790.7px;top:132.05px;height:14px;line-height:14px;font-size:8.5px;color:#e4e4e4;font-weight:normal;letter-spacing:-0.184px;">EtoFormsExercise</div>
<svg class="r" style="left:762.6px;top:148.68px" width="4.4" height="7" viewBox="0 0 5 8"><path d="M0.6 0.8L4.2 4L0.6 7.2Z" fill="none" stroke="#c4c4c4" stroke-width="1"/></svg>
<svg class="r" style="left:771.0px;top:148.98px" width="4.4" height="6.4" viewBox="0 0 4.4 6.4"><path d="M1.1 2.4V1.7A1.1 1.1 0 0 1 3.3 1.7V2.4" fill="none" stroke="#3b8fe4" stroke-width="0.95"/><rect x="0.15" y="2.2" width="4.1" height="4.1" rx="0.5" fill="#3b8fe4"/><rect x="1.45" y="3.5" width="1.5" height="1.7" fill="#1f2a36"/></svg>
<svg class="r" style="left:777px;top:148.28px" width="10" height="8.6" viewBox="0 0 10 8.6"><rect x="0.5" y="0.5" width="9" height="7.3" rx="0.3" fill="#262626" stroke="#8e8e8e" stroke-width="0.9"/><text x="1.5" y="6" font-family="Liberation Sans,sans-serif" font-size="5" font-weight="bold" fill="#5fd070">C#</text></svg>
<div class="t" style="left:790.7px;top:145.05px;height:14px;line-height:14px;font-size:8.5px;color:#e4e4e4;font-weight:normal;letter-spacing:-0.142px;">FileCompDecompExercise</div>
<svg class="r" style="left:762.6px;top:161.71px" width="4.4" height="7" viewBox="0 0 5 8"><path d="M0.6 0.8L4.2 4L0.6 7.2Z" fill="none" stroke="#c4c4c4" stroke-width="1"/></svg>
<svg class="r" style="left:771.0px;top:162.01px" width="4.4" height="6.4" viewBox="0 0 4.4 6.4"><path d="M1.1 2.4V1.7A1.1 1.1 0 0 1 3.3 1.7V2.4" fill="none" stroke="#3b8fe4" stroke-width="0.95"/><rect x="0.15" y="2.2" width="4.1" height="4.1" rx="0.5" fill="#3b8fe4"/><rect x="1.45" y="3.5" width="1.5" height="1.7" fill="#1f2a36"/></svg>
<svg class="r" style="left:777px;top:161.31px" width="10" height="8.6" viewBox="0 0 10 8.6"><rect x="0.5" y="0.5" width="9" height="7.3" rx="0.3" fill="#262626" stroke="#8e8e8e" stroke-width="0.9"/><text x="1.5" y="6" font-family="Liberation Sans,sans-serif" font-size="5" font-weight="bold" fill="#5fd070">C#</text></svg>
<div class="t" style="left:790.7px;top:159.05px;height:14px;line-height:14px;font-size:8.5px;color:#e4e4e4;font-weight:normal;letter-spacing:-0.273px;">FusionCacheExercise</div>
<svg class="r" style="left:762.6px;top:174.73px" width="4.4" height="7" viewBox="0 0 5 8"><path d="M0.6 0.8L4.2 4L0.6 7.2Z" fill="none" stroke="#c4c4c4" stroke-width="1"/></svg>
<svg class="r" style="left:771.0px;top:175.03px" width="4.4" height="6.4" viewBox="0 0 4.4 6.4"><path d="M1.1 2.4V1.7A1.1 1.1 0 0 1 3.3 1.7V2.4" fill="none" stroke="#3b8fe4" stroke-width="0.95"/><rect x="0.15" y="2.2" width="4.1" height="4.1" rx="0.5" fill="#3b8fe4"/><rect x="1.45" y="3.5" width="1.5" height="1.7" fill="#1f2a36"/></svg>
<svg class="r" style="left:777px;top:174.33px" width="10" height="8.6" viewBox="0 0 10 8.6"><rect x="0.5" y="0.5" width="9" height="7.3" rx="0.3" fill="#262626" stroke="#8e8e8e" stroke-width="0.9"/><text x="1.5" y="6" font-family="Liberation Sans,sans-serif" font-size="5" font-weight="bold" fill="#5fd070">C#</text></svg>
<div class="t" style="left:790.7px;top:172.05px;height:14px;line-height:14px;font-size:8.5px;color:#e4e4e4;font-weight:normal;letter-spacing:-0.119px;">GenericRepositoryExercise</div>
<svg class="r" style="left:762.6px;top:187.76px" width="4.4" height="7" viewBox="0 0 5 8"><path d="M0.6 0.8L4.2 4L0.6 7.2Z" fill="none" stroke="#c4c4c4" stroke-width="1"/></svg>
<svg class="r" style="left:771.0px;top:188.06px" width="4.4" height="6.4" viewBox="0 0 4.4 6.4"><path d="M1.1 2.4V1.7A1.1 1.1 0 0 1 3.3 1.7V2.4" fill="none" stroke="#3b8fe4" stroke-width="0.95"/><rect x="0.15" y="2.2" width="4.1" height="4.1" rx="0.5" fill="#3b8fe4"/><rect x="1.45" y="3.5" width="1.5" height="1.7" fill="#1f2a36"/></svg>
<svg class="r" style="left:777px;top:187.36px" width="10" height="8.6" viewBox="0 0 10 8.6"><rect x="0.5" y="0.5" width="9" height="7.3" rx="0.3" fill="#262626" stroke="#8e8e8e" stroke-width="0.9"/><text x="1.5" y="6" font-family="Liberation Sans,sans-serif" font-size="5" font-weight="bold" fill="#5fd070">C#</text></svg>
<div class="t" style="left:790.7px;top:185.05px;height:14px;line-height:14px;font-size:8.5px;color:#e4e4e4;font-weight:normal;letter-spacing:-0.076px;">IdGeneratorExercise</div>
<svg class="r" style="left:762.6px;top:200.79px" width="4.4" height="7" viewBox="0 0 5 8"><path d="M0.6 0.8L4.2 4L0.6 7.2Z" fill="none" stroke="#c4c4c4" stroke-width="1"/></svg>
<svg class="r" style="left:771.0px;top:201.09px" width="4.4" height="6.4" viewBox="0 0 4.4 6.4"><path d="M1.1 2.4V1.7A1.1 1.1 0 0 1 3.3 1.7V2.4" fill="none" stroke="#3b8fe4" stroke-width="0.95"/><rect x="0.15" y="2.2" width="4.1" height="4.1" rx="0.5" fill="#3b8fe4"/><rect x="1.45" y="3.5" width="1.5" height="1.7" fill="#1f2a36"/></svg>
<svg class="r" style="left:776.5px;top:199.59px" width="11" height="11" viewBox="0 0 11 11"><rect x="2" y="0.6" width="8.4" height="8" fill="none" stroke="#c0c0c0" stroke-width="0.9"/><path d="M2 2.8H10.4" stroke="#c0c0c0" stroke-width="0.9"/><circle cx="3.4" cy="7.4" r="3" fill="#3d9be8"/><path d="M0.6 7.4H6.2M3.4 4.4V10.4" stroke="#1b4e80" stroke-width="0.5"/></svg>
<div class="t" style="left:790.7px;top:198.05px;height:14px;line-height:14px;font-size:8.5px;color:#e4e4e4;font-weight:normal;letter-spacing:-0.107px;">MapsuiExercise</div>
<svg class="r" style="left:762.6px;top:213.81px" width="4.4" height="7" viewBox="0 0 5 8"><path d="M0.6 0.8L4.2 4L0.6 7.2Z" fill="none" stroke="#c4c4c4" stroke-width="1"/></svg>
<svg class="r" style="left:771.0px;top:214.11px" width="4.4" height="6.4" viewBox="0 0 4.4 6.4"><path d="M1.1 2.4V1.7A1.1 1.1 0 0 1 3.3 1.7V2.4" fill="none" stroke="#3b8fe4" stroke-width="0.95"/><rect x="0.15" y="2.2" width="4.1" height="4.1" rx="0.5" fill="#3b8fe4"/><rect x="1.45" y="3.5" width="1.5" height="1.7" fill="#1f2a36"/></svg>
<svg class="r" style="left:777px;top:213.41px" width="10" height="8.6" viewBox="0 0 10 8.6"><rect x="0.5" y="0.5" width="9" height="7.3" rx="0.3" fill="#262626" stroke="#8e8e8e" stroke-width="0.9"/><text x="1.5" y="6" font-family="Liberation Sans,sans-serif" font-size="5" font-weight="bold" fill="#5fd070">C#</text></svg>
<div class="t" style="left:790.7px;top:211.05px;height:14px;line-height:14px;font-size:8.5px;color:#e4e4e4;font-weight:normal;letter-spacing:-0.300px;">MLNETExercise</div>
<svg class="r" style="left:762.6px;top:226.84px" width="4.4" height="7" viewBox="0 0 5 8"><path d="M0.6 0.8L4.2 4L0.6 7.2Z" fill="none" stroke="#c4c4c4" stroke-width="1"/></svg>
<svg class="r" style="left:771.0px;top:227.14px" width="4.4" height="6.4" viewBox="0 0 4.4 6.4"><path d="M1.1 2.4V1.7A1.1 1.1 0 0 1 3.3 1.7V2.4" fill="none" stroke="#3b8fe4" stroke-width="0.95"/><rect x="0.15" y="2.2" width="4.1" height="4.1" rx="0.5" fill="#3b8fe4"/><rect x="1.45" y="3.5" width="1.5" height="1.7" fill="#1f2a36"/></svg>
<svg class="r" style="left:777px;top:226.44px" width="10" height="8.6" viewBox="0 0 10 8.6"><rect x="0.5" y="0.5" width="9" height="7.3" rx="0.3" fill="#262626" stroke="#8e8e8e" stroke-width="0.9"/><text x="1.5" y="6" font-family="Liberation Sans,sans-serif" font-size="5" font-weight="bold" fill="#5fd070">C#</text></svg>
<div class="t" style="left:790.7px;top:224.05px;height:14px;line-height:14px;font-size:8.5px;color:#e4e4e4;font-weight:normal;letter-spacing:-0.093px;">QrCodeGeneratorExercise</div>
<svg class="r" style="left:762px;top:241.26px" width="6" height="6" viewBox="0 0 6 6"><path d="M5 0.6V5H0.6Z" fill="#e0e0e0"/></svg>
<svg class="r" style="left:771.0px;top:240.16px" width="4.4" height="6.4" viewBox="0 0 4.4 6.4"><path d="M1.1 2.4V1.7A1.1 1.1 0 0 1 3.3 1.7V2.4" fill="none" stroke="#3b8fe4" stroke-width="0.95"/><rect x="0.15" y="2.2" width="4.1" height="4.1" rx="0.5" fill="#3b8fe4"/><rect x="1.45" y="3.5" width="1.5" height="1.7" fill="#1f2a36"/></svg>
<svg class="r" style="left:777px;top:239.46px" width="10" height="8.6" viewBox="0 0 10 8.6"><rect x="0.5" y="0.5" width="9" height="7.3" rx="0.3" fill="#262626" stroke="#8e8e8e" stroke-width="0.9"/><text x="1.5" y="6" font-family="Liberation Sans,sans-serif" font-size="5" font-weight="bold" fill="#5fd070">C#</text></svg>
<div class="t" style="left:790.7px;top:237.05px;height:14px;line-height:14px;font-size:8.5px;color:#ffffff;font-weight:bold;letter-spacing:-0.286px;">QuestPDFExercise</div>
<svg class="r" style="left:774.6px;top:252.89px" width="4.4" height="7" viewBox="0 0 5 8"><path d="M0.6 0.8L4.2 4L0.6 7.2Z" fill="none" stroke="#c4c4c4" stroke-width="1"/></svg>
<svg class="r" style="left:788px;top:252.19px" width="11" height="9" viewBox="0 0 11 9"><rect x="0.6" y="2.6" width="3" height="3" fill="none" stroke="#c8c8c8" stroke-width="0.8"/><rect x="4" y="4.6" width="3.4" height="3.4" fill="none" stroke="#c8c8c8" stroke-width="0.9"/><rect x="6.4" y="0.6" width="3.6" height="3.6" fill="none" stroke="#c8c8c8" stroke-width="0.9"/><path d="M2.4 4.2H6.4" stroke="#c8c8c8" stroke-width="0.8"/></svg>
<div class="t" style="left:802.3px;top:250.55px;height:14px;line-height:14px;font-size:7.8px;color:#e4e4e4;font-weight:normal;letter-spacing:-0.064px;">依赖项</div>
<div class="r" style="left:756.2px;top:276.34px;width:314.8px;height:12.7px;background:#3a3a3a"></div>
<svg class="r" style="left:774.6px;top:265.92px" width="4.4" height="7" viewBox="0 0 5 8"><path d="M0.6 0.8L4.2 4L0.6 7.2Z" fill="none" stroke="#c4c4c4" stroke-width="1"/></svg>
<svg class="r" style="left:782.8px;top:266.22px" width="4.4" height="6.4" viewBox="0 0 4.4 6.4"><path d="M1.1 2.4V1.7A1.1 1.1 0 0 1 3.3 1.7V2.4" fill="none" stroke="#3b8fe4" stroke-width="0.95"/><rect x="0.15" y="2.2" width="4.1" height="4.1" rx="0.5" fill="#3b8fe4"/><rect x="1.45" y="3.5" width="1.5" height="1.7" fill="#1f2a36"/></svg>
<svg class="r" style="left:788.6px;top:265.62px" width="11" height="9" viewBox="0 0 11 9"><text x="0" y="7.4" font-family="Liberation Sans,sans-serif" font-size="8.4" fill="#55c465" textLength="10.2" lengthAdjust="spacingAndGlyphs">C#</text></svg>
<div class="t" style="left:802.3px;top:263.05px;height:14px;line-height:14px;font-size:8.5px;color:#e4e4e4;font-weight:normal;letter-spacing:-0.122px;">CreateInvoiceDetails.cs</div>
<svg class="r" style="left:774.6px;top:278.94px" width="4.4" height="7" viewBox="0 0 5 8"><path d="M0.6 0.8L4.2 4L0.6 7.2Z" fill="none" stroke="#c4c4c4" stroke-width="1"/></svg>
<svg class="r" style="left:782.8px;top:279.24px" width="4.4" height="6.4" viewBox="0 0 4.4 6.4"><path d="M1.1 2.4V1.7A1.1 1.1 0 0 1 3.3 1.7V2.4" fill="none" stroke="#3b8fe4" stroke-width="0.95"/><rect x="0.15" y="2.2" width="4.1" height="4.1" rx="0.5" fill="#3b8fe4"/><rect x="1.45" y="3.5" width="1.5" height="1.7" fill="#1f2a36"/></svg>
<svg class="r" style="left:788.6px;top:278.64px" width="11" height="9" viewBox="0 0 11 9"><text x="0" y="7.4" font-family="Liberation Sans,sans-serif" font-size="8.4" fill="#55c465" textLength="10.2" lengthAdjust="spacingAndGlyphs">C#</text></svg>
<div class="t" style="left:802.3px;top:276.05px;height:14px;line-height:14px;font-size:8.5px;color:#e4e4e4;font-weight:normal;letter-spacing:-0.085px;">CreateInvoiceDocument.cs</div>
<svg class="r" style="left:782.8px;top:292.27px" width="4.4" height="6.4" viewBox="0 0 4.4 6.4"><path d="M1.1 2.4V1.7A1.1 1.1 0 0 1 3.3 1.7V2.4" fill="none" stroke="#3b8fe4" stroke-width="0.95"/><rect x="0.15" y="2.2" width="4.1" height="4.1" rx="0.5" fill="#3b8fe4"/><rect x="1.45" y="3.5" width="1.5" height="1.7" fill="#1f2a36"/></svg>
<svg class="r" style="left:788.6px;top:291.17px" width="10.4" height="9.2" viewBox="0 0 10.4 9.2"><rect x="0.5" y="0.5" width="9.4" height="8.2" fill="#2a2a2a" stroke="#d0d0d0" stroke-width="0.9"/><path d="M1.4 6.4L3.4 4.6L5.2 6L6.6 5L9 6.6" stroke="#3d9be8" stroke-width="0.9" fill="none"/><circle cx="7.2" cy="2.8" r="0.9" fill="#e2b34c"/></svg>
<div class="t" style="left:802.3px;top:289.05px;height:14px;line-height:14px;font-size:8.5px;color:#e4e4e4;font-weight:normal;letter-spacing:0.101px;">dotnetguide.png</div>
<svg class="r" style="left:774.6px;top:304.99px" width="4.4" height="7" viewBox="0 0 5 8"><path d="M0.6 0.8L4.2 4L0.6 7.2Z" fill="none" stroke="#c4c4c4" stroke-width="1"/></svg>
<svg class="r" style="left:782.8px;top:305.29px" width="4.4" height="6.4" viewBox="0 0 4.4 6.4"><path d="M1.1 2.4V1.7A1.1 1.1 0 0 1 3.3 1.7V2.4" fill="none" stroke="#3b8fe4" stroke-width="0.95"/><rect x="0.15" y="2.2" width="4.1" height="4.1" rx="0.5" fill="#3b8fe4"/><rect x="1.45" y="3.5" width="1.5" height="1.7" fill="#1f2a36"/></svg>
<svg class="r" style="left:788.6px;top:304.69px" width="11" height="9" viewBox="0 0 11 9"><text x="0" y="7.4" font-family="Liberation Sans,sans-serif" font-size="8.4" fill="#55c465" textLength="10.2" lengthAdjust="spacingAndGlyphs">C#</text></svg>
<div class="t" style="left:802.3px;top:302.05px;height:14px;line-height:14px;font-size:8.5px;color:#e4e4e4;font-weight:normal;letter-spacing:0.003px;">InvoiceModel.cs</div>
<svg class="r" style="left:774.6px;top:318.02px" width="4.4" height="7" viewBox="0 0 5 8"><path d="M0.6 0.8L4.2 4L0.6 7.2Z" fill="none" stroke="#c4c4c4" stroke-width="1"/></svg>
<svg class="r" style="left:782.8px;top:318.32px" width="4.4" height="6.4" viewBox="0 0 4.4 6.4"><path d="M1.1 2.4V1.7A1.1 1.1 0 0 1 3.3 1.7V2.4" fill="none" stroke="#3b8fe4" stroke-width="0.95"/><rect x="0.15" y="2.2" width="4.1" height="4.1" rx="0.5" fill="#3b8fe4"/><rect x="1.45" y="3.5" width="1.5" height="1.7" fill="#1f2a36"/></svg>
<svg class="r" style="left:788.6px;top:317.72px" width="11" height="9" viewBox="0 0 11 9"><text x="0" y="7.4" font-family="Liberation Sans,sans-serif" font-size="8.4" fill="#55c465" textLength="10.2" lengthAdjust="spacingAndGlyphs">C#</text></svg>
<div class="t" style="left:802.3px;top:315.05px;height:14px;line-height:14px;font-size:8.5px;color:#e4e4e4;font-weight:normal;letter-spacing:-0.047px;">Program.cs</div>
<svg class="r" style="left:762.6px;top:331.05px" width="4.4" height="7" viewBox="0 0 5 8"><path d="M0.6 0.8L4.2 4L0.6 7.2Z" fill="none" stroke="#c4c4c4" stroke-width="1"/></svg>
<svg class="r" style="left:771.0px;top:331.35px" width="4.4" height="6.4" viewBox="0 0 4.4 6.4"><path d="M1.1 2.4V1.7A1.1 1.1 0 0 1 3.3 1.7V2.4" fill="none" stroke="#3b8fe4" stroke-width="0.95"/><rect x="0.15" y="2.2" width="4.1" height="4.1" rx="0.5" fill="#3b8fe4"/><rect x="1.45" y="3.5" width="1.5" height="1.7" fill="#1f2a36"/></svg>
<svg class="r" style="left:777px;top:330.65px" width="10" height="8.6" viewBox="0 0 10 8.6"><rect x="0.5" y="0.5" width="9" height="7.3" rx="0.3" fill="#262626" stroke="#8e8e8e" stroke-width="0.9"/><text x="1.5" y="6" font-family="Liberation Sans,sans-serif" font-size="5" font-weight="bold" fill="#5fd070">C#</text></svg>
<div class="t" style="left:790.7px;top:328.05px;height:14px;line-height:14px;font-size:8.5px;color:#e4e4e4;font-weight:normal;letter-spacing:-0.154px;">ScottPlotWinFormsExercise</div>
<svg class="r" style="left:762.6px;top:344.07px" width="4.4" height="7" viewBox="0 0 5 8"><path d="M0.6 0.8L4.2 4L0.6 7.2Z" fill="none" stroke="#c4c4c4" stroke-width="1"/></svg>
<svg class="r" style="left:771.0px;top:344.37px" width="4.4" height="6.4" viewBox="0 0 4.4 6.4"><path d="M1.1 2.4V1.7A1.1 1.1 0 0 1 3.3 1.7V2.4" fill="none" stroke="#3b8fe4" stroke-width="0.95"/><rect x="0.15" y="2.2" width="4.1" height="4.1" rx="0.5" fill="#3b8fe4"/><rect x="1.45" y="3.5" width="1.5" height="1.7" fill="#1f2a36"/></svg>
<svg class="r" style="left:777px;top:343.67px" width="10" height="8.6" viewBox="0 0 10 8.6"><rect x="0.5" y="0.5" width="9" height="7.3" rx="0.3" fill="#262626" stroke="#8e8e8e" stroke-width="0.9"/><text x="1.5" y="6" font-family="Liberation Sans,sans-serif" font-size="5" font-weight="bold" fill="#5fd070">C#</text></svg>
<div class="t" style="left:790.7px;top:341.05px;height:14px;line-height:14px;font-size:8.5px;color:#e4e4e4;font-weight:normal;letter-spacing:-0.193px;">SpectreExercise</div>
<svg class="r" style="left:762.6px;top:357.10px" width="4.4" height="7" viewBox="0 0 5 8"><path d="M0.6 0.8L4.2 4L0.6 7.2Z" fill="none" stroke="#c4c4c4" stroke-width="1"/></svg>
<svg class="r" style="left:771.0px;top:357.40px" width="4.4" height="6.4" viewBox="0 0 4.4 6.4"><path d="M1.1 2.4V1.7A1.1 1.1 0 0 1 3.3 1.7V2.4" fill="none" stroke="#3b8fe4" stroke-width="0.95"/><rect x="0.15" y="2.2" width="4.1" height="4.1" rx="0.5" fill="#3b8fe4"/><rect x="1.45" y="3.5" width="1.5" height="1.7" fill="#1f2a36"/></svg>
<svg class="r" style="left:777px;top:356.70px" width="10" height="8.6" viewBox="0 0 10 8.6"><rect x="0.5" y="0.5" width="9" height="7.3" rx="0.3" fill="#262626" stroke="#8e8e8e" stroke-width="0.9"/><text x="1.5" y="6" font-family="Liberation Sans,sans-serif" font-size="5" font-weight="bold" fill="#5fd070">C#</text></svg>
<div class="t" style="left:790.7px;top:354.05px;height:14px;line-height:14px;font-size:8.5px;color:#e4e4e4;font-weight:normal;letter-spacing:-0.129px;">TerminalGuiExercise</div>
<svg class="r" style="left:762.6px;top:370.12px" width="4.4" height="7" viewBox="0 0 5 8"><path d="M0.6 0.8L4.2 4L0.6 7.2Z" fill="none" stroke="#c4c4c4" stroke-width="1"/></svg>
<svg class="r" style="left:771.0px;top:370.42px" width="4.4" height="6.4" viewBox="0 0 4.4 6.4"><path d="M1.1 2.4V1.7A1.1 1.1 0 0 1 3.3 1.7V2.4" fill="none" stroke="#3b8fe4" stroke-width="0.95"/><rect x="0.15" y="2.2" width="4.1" height="4.1" rx="0.5" fill="#3b8fe4"/><rect x="1.45" y="3.5" width="1.5" height="1.7" fill="#1f2a36"/></svg>
<svg class="r" style="left:777px;top:369.72px" width="10" height="8.6" viewBox="0 0 10 8.6"><rect x="0.5" y="0.5" width="9" height="7.3" rx="0.3" fill="#262626" stroke="#8e8e8e" stroke-width="0.9"/><text x="1.5" y="6" font-family="Liberation Sans,sans-serif" font-size="5" font-weight="bold" fill="#5fd070">C#</text></svg>
<div class="t" style="left:790.7px;top:367.05px;height:14px;line-height:14px;font-size:8.5px;color:#e4e4e4;font-weight:normal;letter-spacing:-0.100px;">TimeCrontabExercise</div>
<svg class="r" style="left:0;top:0" width="1080" height="521" viewBox="0 0 1080 521"><path d="M550.8 196.0L767 285.8L767.7 284L772.7 290.5L763.9 291.9L765.8 289.2L550.8 196.5Z" fill="#f4200f" stroke="#f4200f" stroke-width="0.5" stroke-linejoin="round"/></svg>
<svg class="r" style="left:0;top:0" width="1080" height="521" viewBox="0 0 1080 521">
<rect x="712" y="445" width="352" height="62" rx="18" fill="#000" fill-opacity="0.07"/>
<defs>
<mask id="mb" maskUnits="userSpaceOnUse" x="700" y="440" width="80" height="70"><rect x="700" y="440" width="80" height="70" fill="#fff"/><ellipse cx="749.2" cy="481.2" rx="13.8" ry="11.5" fill="#000"/><circle cx="730.3" cy="468.4" r="1.75" fill="#000"/><circle cx="740.4" cy="468.4" r="1.75" fill="#000"/></mask>
<mask id="ms" maskUnits="userSpaceOnUse" x="700" y="440" width="80" height="70"><rect x="700" y="440" width="80" height="70" fill="#fff"/><circle cx="745.1" cy="478.4" r="1.5" fill="#000"/><circle cx="753.3" cy="478.4" r="1.5" fill="#000"/></mask>
</defs>
<g opacity="0.56" fill="#fff">
<g mask="url(#mb)"><ellipse cx="735.1" cy="471.2" rx="14.6" ry="11.6"/><path d="M725.6 478.6L724.4 485L731.5 481.6Z"/></g>
<g mask="url(#ms)"><ellipse cx="749.2" cy="481.2" rx="12.8" ry="10.5"/><path d="M752.6 490.6L757.6 493.2L756.6 488.6Z"/></g>
</g>
<text x="771.8" y="488.6" font-family="Liberation Sans,Noto Sans CJK SC,sans-serif" font-size="29" fill="#8c8c8c" textLength="274.6" lengthAdjust="spacing">公众号 · 追逐时光者</text>
</svg>
</body></html>
